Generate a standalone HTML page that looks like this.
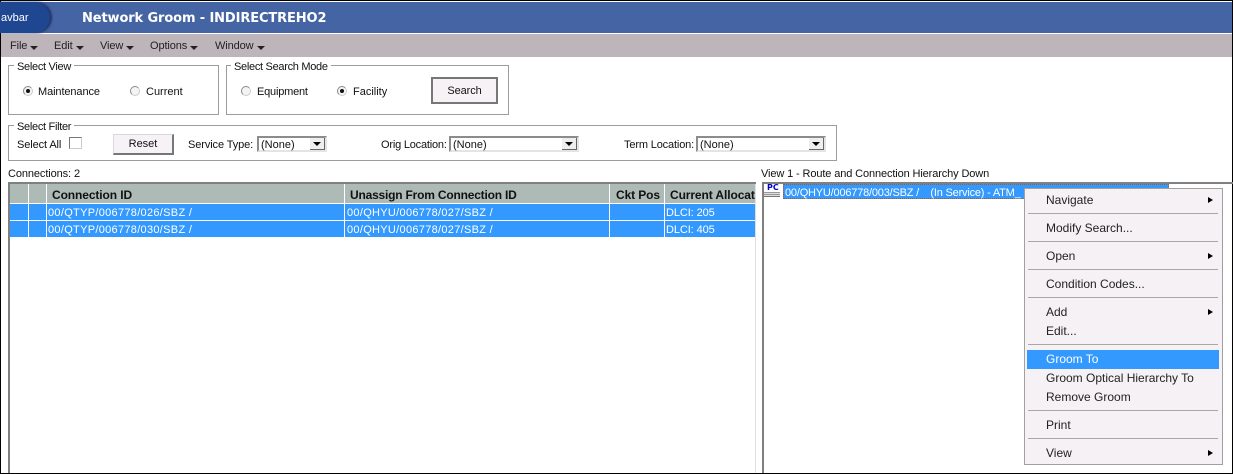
<!DOCTYPE html>
<html><head><meta charset="utf-8"><style>
html,body{margin:0;padding:0;background:#fff}
#p{position:relative;width:1233px;height:474px;overflow:hidden;background:#fff;font:11px/14px "Liberation Sans",sans-serif;color:#111}
#p div,#p span.t{position:absolute;white-space:pre}
.box{border:1px solid #9c9c9c;box-sizing:border-box}
.leg{background:#fff;padding:0 3px;height:14px;letter-spacing:-.3px}
.btn{box-sizing:border-box;background:#f6f2f6;border:1px solid #d8d8d8;border-right:2px solid #777;border-bottom:2px solid #777;text-align:center;line-height:19px}
.radio{width:8px;height:8px;border-radius:50%;border:1px solid #ccc;border-top-color:#888;border-left-color:#888;background:#f4f4f4}
.radio.on::after{content:"";position:absolute;left:2px;top:2px;width:4px;height:4px;border-radius:50%;background:#111}
.sel{box-sizing:border-box;height:16px;background:#fff;border:2px solid #8c8c8c;border-right-color:#e4e4e4;border-bottom-color:#e4e4e4;line-height:15px;padding-left:2px}
.arr{right:0;top:0;width:15px;height:12px;background:#eee;border-right:1px solid #666;border-bottom:1px solid #666;box-sizing:border-box}
.arr::after{content:"";position:absolute;left:3px;top:4px;border:4px solid transparent;border-top:4px solid #000;border-bottom:0}
.m{color:#222;letter-spacing:-.1px}
.mc::after{content:"";position:absolute;border:4px solid transparent;border-top:4px solid #222;border-bottom:0;left:100%;top:7px;margin-left:3px}
.hd{font-weight:bold;font-size:12px;top:188px;color:#111;letter-spacing:-.1px}
.cell{color:#fff;font-size:11px;letter-spacing:.3px}
.sep{left:1028px;width:190px;height:1px;background:#a8a8a8}
.it{left:1046px;font-size:12px;color:#222}
.sub{left:1208px;border:3.5px solid transparent;border-left:5px solid #000;border-right:0}
</style></head><body><div id="p">
<div style="left:0;top:0;width:1233px;height:1px;background:#000"></div>
<div style="left:0;top:0;width:1px;height:474px;background:#000"></div>
<div style="left:1232px;top:0;width:1px;height:474px;background:#000"></div>
<div style="left:0;top:473px;width:1233px;height:1px;background:#000"></div>
<div style="left:1px;top:2px;width:1231px;height:31px;background:#4464a4"></div>
<div style="left:-30px;top:2px;width:80px;height:31px;border-radius:0 18px 18px 0;background:#1f4690;box-shadow:2px 0 2px #23315f"></div>
<div style="left:1px;top:11px;color:#fff;font-size:11px">avbar</div>
<div style="left:82px;top:11px;color:#fff;font:bold 13px/16px 'DejaVu Sans',sans-serif;letter-spacing:-.12px">Network Groom - INDIRECTREHO2</div>
<div style="left:1px;top:34px;width:1231px;height:23px;background:#bdb5ba"></div>
<div class="m mc" style="left:10px;top:39px">File</div>
<div class="m mc" style="left:54px;top:39px">Edit</div>
<div class="m mc" style="left:100px;top:39px">View</div>
<div class="m mc" style="left:150px;top:39px">Options</div>
<div class="m mc" style="left:215px;top:39px">Window</div>

<div class="box" style="left:8px;top:65px;width:211px;height:50px"></div>
<div class="leg" style="left:14px;top:60px">Select View</div>
<div class="radio on" style="left:23px;top:86px"></div>
<div style="left:38px;top:85px;letter-spacing:-.1px">Maintenance</div>
<div class="radio" style="left:130px;top:86px"></div>
<div style="left:146px;top:85px">Current</div>

<div class="box" style="left:226px;top:65px;width:283px;height:50px"></div>
<div class="leg" style="left:231px;top:60px">Select Search Mode</div>
<div class="radio" style="left:241px;top:86px"></div>
<div style="left:257px;top:85px;letter-spacing:-.2px">Equipment</div>
<div class="radio on" style="left:337px;top:86px"></div>
<div style="left:353px;top:85px">Facility</div>
<div class="btn" style="left:431px;top:77px;width:67px;height:27px;border:2px solid #777;line-height:24px;letter-spacing:-.1px">Search</div>

<div class="box" style="left:8px;top:125px;width:829px;height:36px"></div>
<div class="leg" style="left:14px;top:120px">Select Filter</div>
<div style="left:17px;top:138px;letter-spacing:-.1px">Select All</div>
<div style="left:69px;top:137px;width:11px;height:10px;border:1px solid #ccc;border-top-color:#777;border-left-color:#777"></div>
<div class="btn" style="left:113px;top:134px;width:61px;height:21px">Reset</div>
<div style="left:188px;top:138px;letter-spacing:-.1px">Service Type:</div>
<div class="sel" style="left:257px;top:136px;width:70px">(None)<div class="arr"></div></div>
<div style="left:381px;top:138px;letter-spacing:-.2px">Orig Location:</div>
<div class="sel" style="left:449px;top:136px;width:130px">(None)<div class="arr"></div></div>
<div style="left:624px;top:138px;letter-spacing:-.15px">Term Location:</div>
<div class="sel" style="left:696px;top:136px;width:130px">(None)<div class="arr"></div></div>

<div style="left:8px;top:167px;letter-spacing:-.1px">Connections: 2</div>
<div style="left:8px;top:182px;width:748px;height:2px;background:#808080"></div>
<div style="left:8px;top:182px;width:2px;height:291px;background:#808080"></div>
<div style="left:755px;top:184px;width:1px;height:289px;background:#e0e0e0"></div>
<div style="left:10px;top:184px;width:745px;height:19px;background:#adbab5"></div>
<div style="left:10px;top:204px;width:745px;height:16px;background:#3399ff"></div>
<div style="left:10px;top:221px;width:745px;height:16px;background:#3399ff"></div>
<div style="left:28px;top:184px;width:1px;height:53px;background:#fff"></div>
<div style="left:46px;top:184px;width:1px;height:53px;background:#fff"></div>
<div style="left:344px;top:184px;width:1px;height:53px;background:#fff"></div>
<div style="left:609px;top:184px;width:1px;height:53px;background:#fff"></div>
<div style="left:664px;top:184px;width:1px;height:53px;background:#fff"></div>
<div class="hd" style="left:52px">Connection ID</div>
<div class="hd" style="left:350px;letter-spacing:-.2px">Unassign From Connection ID</div>
<div class="hd" style="left:616px">Ckt Pos</div>
<div class="hd" style="left:670px;width:85px;overflow:hidden">Current Allocat</div>
<div class="cell" style="left:48px;top:206px">00/QTYP/006778/026/SBZ /</div>
<div class="cell" style="left:347px;top:206px">00/QHYU/006778/027/SBZ /</div>
<div class="cell" style="left:666px;top:206px;letter-spacing:-.1px">DLCI: 205</div>
<div class="cell" style="left:48px;top:223px">00/QTYP/006778/030/SBZ /</div>
<div class="cell" style="left:347px;top:223px">00/QHYU/006778/027/SBZ /</div>
<div class="cell" style="left:666px;top:223px;letter-spacing:-.1px">DLCI: 405</div>

<div style="left:761px;top:167px;letter-spacing:-.12px">View 1 - Route and Connection Hierarchy Down</div>
<div style="left:762px;top:182px;width:471px;height:2px;background:#808080"></div>
<div style="left:762px;top:182px;width:2px;height:291px;background:#808080"></div>
<div style="left:764px;top:184px;width:19px;height:15px;overflow:hidden">
<div style="left:3px;top:0;color:#00c;font:bold 8px/8px 'DejaVu Sans',sans-serif">PC</div>
<div style="left:0;top:8px;width:16px;height:5px;background:linear-gradient(#999 0 1px,#ddd 1px 2px,#999 2px 3px,#ddd 3px 4px,#777 4px 5px)"></div></div>
<div style="left:783px;top:184px;width:386px;height:15px;background:#3399ff;box-sizing:border-box;border:1px dotted #a85a20"></div>
<div class="cell" style="left:785px;top:186px;font-size:11px;letter-spacing:-.2px">00/QHYU/006778/003/SBZ /    (In Service) - ATM_</div>

<div style="left:1024px;top:188px;width:199px;height:277px;box-sizing:border-box;background:#f5f1f5;border:1px solid #a0a0a0"></div>
<div style="left:1027px;top:350px;width:192px;height:19px;background:#3399ff"></div>
<div class="sep" style="top:213px"></div><div class="sep" style="top:241px"></div><div class="sep" style="top:269px"></div><div class="sep" style="top:297px"></div><div class="sep" style="top:344px"></div><div class="sep" style="top:410px"></div><div class="sep" style="top:438px"></div>
<div class="it" style="top:193px">Navigate</div><div class="sub" style="top:197px"></div>
<div class="it" style="top:221px">Modify Search...</div>
<div class="it" style="top:249px">Open</div><div class="sub" style="top:253px"></div>
<div class="it" style="top:277px">Condition Codes...</div>
<div class="it" style="top:305px">Add</div><div class="sub" style="top:309px"></div>
<div class="it" style="top:324px">Edit...</div>
<div class="it" style="top:352px;color:#fff">Groom To</div>
<div class="it" style="top:371px">Groom Optical Hierarchy To</div>
<div class="it" style="top:390px">Remove Groom</div>
<div class="it" style="top:418px">Print</div>
<div class="it" style="top:446px">View</div><div class="sub" style="top:450px"></div>
</div></body></html>
